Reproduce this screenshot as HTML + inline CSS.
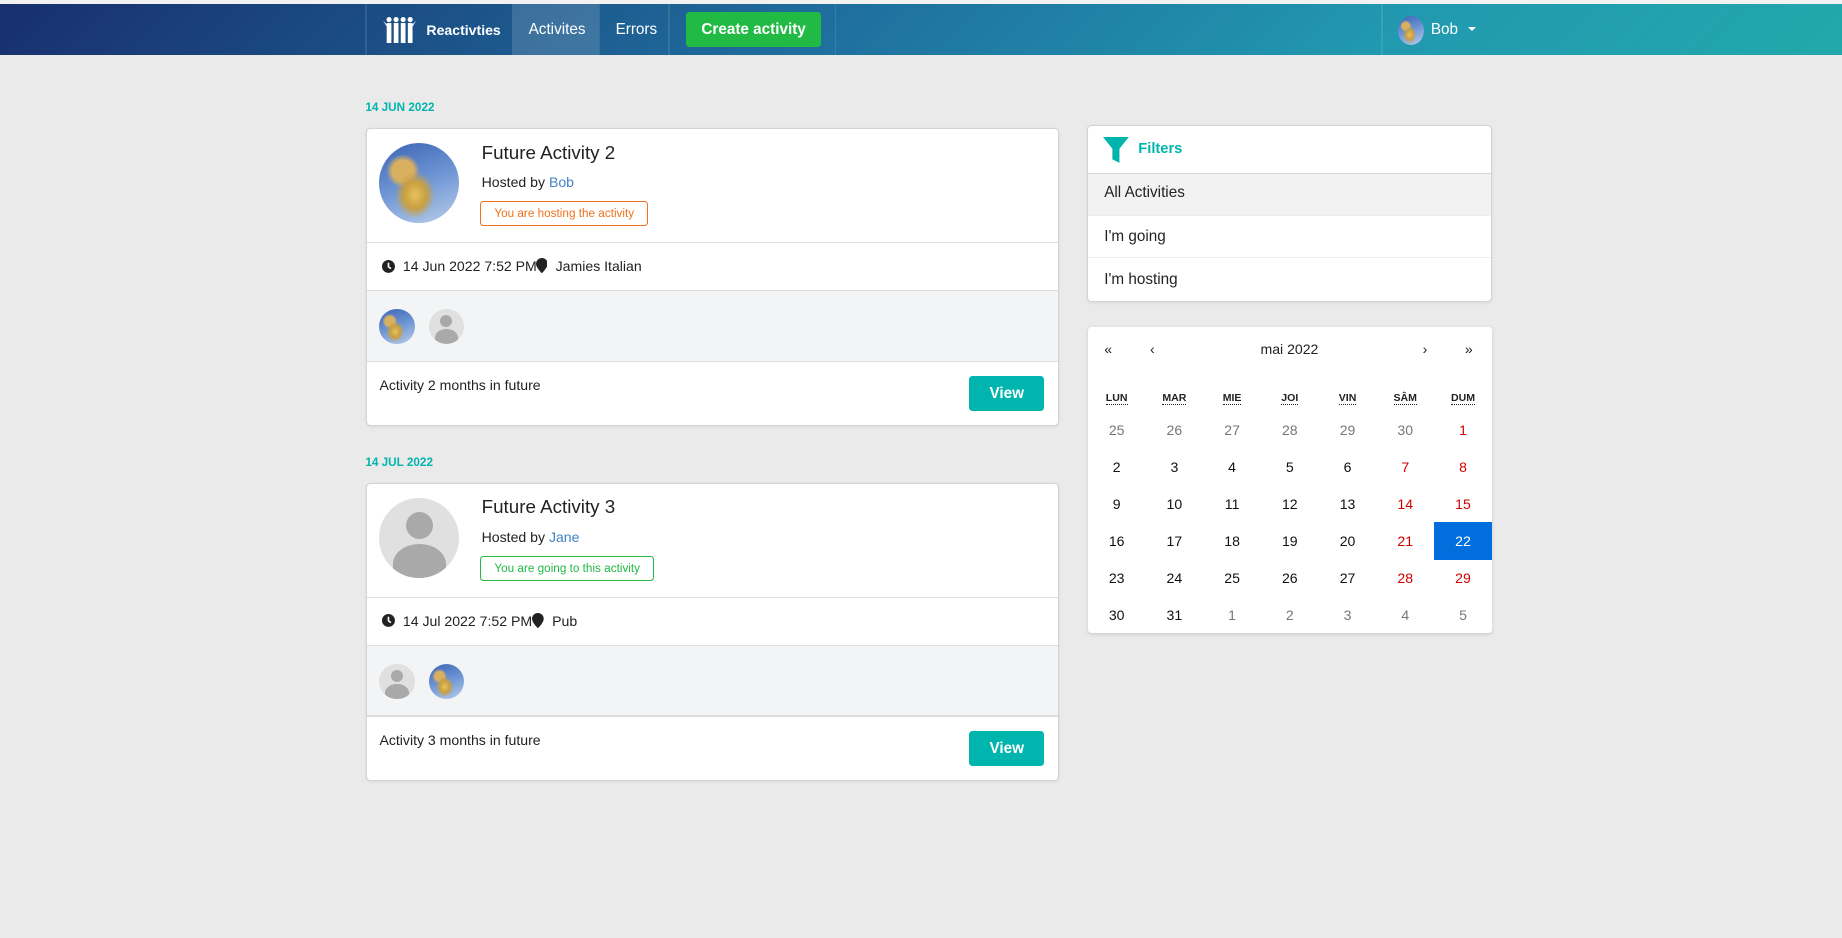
<!DOCTYPE html>
<html><head><meta charset="utf-8">
<style>
html,body{margin:0;padding:0;width:1842px;height:938px;overflow:hidden;background:#eaeaea;font-family:"Liberation Sans",sans-serif;}
#w{position:relative;width:1568px;height:798px;zoom:1.17474;background:#eaeaea;}
.a{position:absolute;}
.nav{left:0;top:3px;width:1568px;height:44px;background:linear-gradient(135deg,#182f6e 0%,#1f6f9e 45%,#2199b0 75%,#22a8ab 100%);}
.nt{color:#fff;font-size:13px;top:18px;}
.sep{top:3px;width:1px;height:44px;background:rgba(255,255,255,0.1);}
.card{background:#fff;border-radius:3px;box-shadow:0 1px 3px 0 #d4d4d5,0 0 0 1px #d4d4d5;}
.hr{height:1px;background:#dededf;left:0;width:100%;}
.date{color:#00b5ad;font-size:10px;font-weight:bold;}
.av{border-radius:50%;overflow:hidden;}
.photo{background:radial-gradient(ellipse at 45% 65%,#e8c060 0%,#c9a040 18%,transparent 32%),radial-gradient(circle at 30% 35%,#d8b060 0 14%,transparent 22%),linear-gradient(160deg,#3c64b4 0%,#6f96d4 50%,#b8cdea 100%);}
.ph{background:#e0e0e0;}
.ph::before{content:"";position:absolute;left:33%;top:17%;width:34%;height:34%;border-radius:50%;background:#a9a9a9;}
.ph::after{content:"";position:absolute;left:17%;top:57%;width:66%;height:50%;border-radius:50% 50% 0 0;background:#a9a9a9;}
.t{font-size:12px;color:#222;}
.btn{background:#00b5ad;color:#fff;font-weight:bold;font-size:13px;border-radius:3px;text-align:center;line-height:30px;}
.cal td{text-align:center;font-size:12px;height:31.6px;padding:0;color:#111;font-family:"Liberation Sans",Arial,sans-serif;}
.cal th{font-size:9px;font-weight:bold;height:20px;color:#222;}
.cal th span{border-bottom:1px dotted #222;}
.g{color:#777!important}.r{color:#d10000!important}
</style></head><body><div id="w">
<div class="a" style="left:0;top:0;width:1568px;height:3px;background:#f2f2f2"></div>
<div class="a nav"></div>
<div class="a sep" style="left:311px"></div>
<div class="a" style="left:436px;top:3px;width:74px;height:44px;background:rgba(255,255,255,0.15)"></div>
<div class="a sep" style="left:510px"></div>
<div class="a sep" style="left:569px"></div>
<div class="a sep" style="left:711px"></div>
<div class="a sep" style="left:1176px"></div>
<svg class="a" style="left:325px;top:14px" width="30" height="24" viewBox="0 0 30 24" fill="#fff">
<circle cx="6" cy="3" r="2.2"/><circle cx="12" cy="3" r="2.2"/><circle cx="18" cy="3" r="2.2"/><circle cx="24" cy="3" r="2.2"/>
<rect x="4" y="6" width="4" height="17"/><rect x="10" y="6" width="4" height="17"/><rect x="16" y="6" width="4" height="17"/><rect x="22" y="6" width="4" height="17"/>
<path d="M1 4 L4 9 L4 7Z M29 4 L26 9 L26 7Z"/></svg>
<div class="a nt" style="left:363px;font-weight:bold;font-size:12px;top:19px">Reactivties</div>
<div class="a nt" style="left:450px">Activites</div>
<div class="a nt" style="left:524px">Errors</div>
<div class="a" style="left:584px;top:10px;width:115px;height:30px;background:#21ba45;border-radius:3px;color:#fff;font-weight:bold;font-size:13px;text-align:center;line-height:30px">Create activity</div>
<div class="a av photo" style="left:1190px;top:14px;width:22px;height:24px"></div>
<div class="a nt" style="left:1218px">Bob</div>
<div class="a" style="left:1250px;top:23px;width:0;height:0;border-left:4px solid transparent;border-right:4px solid transparent;border-top:4px solid #fff"></div>

<!-- card 1 -->
<div class="a date" style="left:311px;top:86px">14 JUN 2022</div>
<div class="a card" style="left:312px;top:110px;width:589px;height:252px">
 <div class="a av photo" style="left:11px;top:12px;width:68px;height:68px"></div>
 <div class="a" style="left:98px;top:11px;font-size:16px;color:#222">Future Activity 2</div>
 <div class="a t" style="left:98px;top:38px">Hosted by <span style="color:#4183c4">Bob</span></div>
 <div class="a" style="left:97px;top:61px;width:141px;height:20px;border:1px solid #f2711c;border-radius:3px;color:#f2711c;font-size:10px;text-align:center;line-height:20px">You are hosting the activity</div>
 <div class="a hr" style="top:96px"></div>
 <svg class="a" style="left:13px;top:111px" width="11" height="11" viewBox="0 0 12 12"><circle cx="6" cy="6" r="6" fill="#222"/><path d="M6 2.5V6.3L8.3 8" stroke="#fff" stroke-width="1.5" fill="none"/></svg>
 <div class="a t" style="left:31px;top:110px">14 Jun 2022 7:52 PM</div>
 <svg class="a" style="left:144px;top:110px" width="10" height="13" viewBox="0 0 10 13"><path d="M5 0C2.2 0 0 2.2 0 5c0 3.2 5 8 5 8s5-4.8 5-8C10 2.2 7.8 0 5 0z" fill="#222"/></svg>
 <div class="a t" style="left:161px;top:110px">Jamies Italian</div>
 <div class="a hr" style="top:137px"></div>
 <div class="a" style="left:0;top:138px;width:100%;height:59px;background:#f3f4f5"></div>
 <div class="a av photo" style="left:11px;top:153px;width:30px;height:30px"></div>
 <div class="a av ph" style="left:53px;top:153px;width:30px;height:30px"></div>
 <div class="a hr" style="top:197px"></div>
 <div class="a t" style="left:11px;top:211px">Activity 2 months in future</div>
 <div class="a btn" style="left:513px;top:210px;width:64px;height:30px">View</div>
</div>

<!-- card 2 -->
<div class="a date" style="left:311px;top:388px">14 JUL 2022</div>
<div class="a card" style="left:312px;top:412px;width:589px;height:252px">
 <div class="a av ph" style="left:11px;top:12px;width:68px;height:68px"></div>
 <div class="a" style="left:98px;top:10px;font-size:16px;color:#222">Future Activity 3</div>
 <div class="a t" style="left:98px;top:38px">Hosted by <span style="color:#4183c4">Jane</span></div>
 <div class="a" style="left:97px;top:61px;width:146px;height:20px;border:1px solid #21ba45;border-radius:3px;color:#21ba45;font-size:10px;text-align:center;line-height:20px">You are going to this activity</div>
 <div class="a hr" style="top:96px"></div>
 <svg class="a" style="left:13px;top:111px" width="11" height="11" viewBox="0 0 12 12"><circle cx="6" cy="6" r="6" fill="#222"/><path d="M6 2.5V6.3L8.3 8" stroke="#fff" stroke-width="1.5" fill="none"/></svg>
 <div class="a t" style="left:31px;top:110px">14 Jul 2022 7:52 PM</div>
 <svg class="a" style="left:141px;top:110px" width="10" height="13" viewBox="0 0 10 13"><path d="M5 0C2.2 0 0 2.2 0 5c0 3.2 5 8 5 8s5-4.8 5-8C10 2.2 7.8 0 5 0z" fill="#222"/></svg>
 <div class="a t" style="left:158px;top:110px">Pub</div>
 <div class="a hr" style="top:137px"></div>
 <div class="a" style="left:0;top:138px;width:100%;height:59px;background:#f3f4f5"></div>
 <div class="a av ph" style="left:11px;top:153px;width:30px;height:30px"></div>
 <div class="a av photo" style="left:53px;top:153px;width:30px;height:30px"></div>
 <div class="a hr" style="top:197px"></div>
 <div class="a t" style="left:11px;top:211px">Activity 3 months in future</div>
 <div class="a btn" style="left:513px;top:210px;width:64px;height:30px">View</div>
</div>

<!-- filters -->
<div class="a card" style="left:926px;top:107px;width:343px;height:149px;overflow:hidden">
 <svg class="a" style="left:13px;top:10px" width="22" height="22" viewBox="0 0 22 22"><path d="M0 0H22L14 10V22L8 19V10Z" fill="#00b5ad"/></svg>
 <div class="a" style="left:43px;top:13px;color:#00b5ad;font-size:12.5px;font-weight:bold">Filters</div>
 <div class="a" style="left:0;top:40px;width:100%;height:2px;background:#d4d4d5"></div>
 <div class="a" style="left:0;top:41px;width:100%;height:35px;background:#f2f2f2"></div>
 <div class="a t" style="left:14px;top:50px;font-size:13px">All Activities</div>
 <div class="a hr" style="top:76px;background:#ececec"></div>
 <div class="a t" style="left:14px;top:87px;font-size:13px">I'm going</div>
 <div class="a hr" style="top:112px;background:#ececec"></div>
 <div class="a t" style="left:14px;top:124px;font-size:13px">I'm hosting</div>
</div>

<!-- calendar -->
<div class="a card" style="left:926px;top:278px;width:344px;height:261px;box-shadow:0 1px 3px #ccc">
 <div class="a t" style="left:14px;top:12px;font-size:12px">«</div>
 <div class="a t" style="left:53px;top:12px;font-size:12px">‹</div>
 <div class="a t" style="left:147px;top:12px;font-size:12px">mai 2022</div>
 <div class="a t" style="left:285px;top:12px;font-size:12px">›</div>
 <div class="a t" style="left:321px;top:12px;font-size:12px">»</div>
 <table class="a cal" style="left:0;top:50px;width:344px;border-collapse:collapse;table-layout:fixed">
 <tr><th><span>LUN</span></th><th><span>MAR</span></th><th><span>MIE</span></th><th><span>JOI</span></th><th><span>VIN</span></th><th><span>SÂM</span></th><th><span>DUM</span></th></tr>
 <tr><td class="g">25</td><td class="g">26</td><td class="g">27</td><td class="g">28</td><td class="g">29</td><td class="g">30</td><td class="r">1</td></tr>
 <tr><td>2</td><td>3</td><td>4</td><td>5</td><td>6</td><td class="r">7</td><td class="r">8</td></tr>
 <tr><td>9</td><td>10</td><td>11</td><td>12</td><td>13</td><td class="r">14</td><td class="r">15</td></tr>
 <tr><td>16</td><td>17</td><td>18</td><td>19</td><td>20</td><td class="r">21</td><td style="background:#006edc;color:#fff">22</td></tr>
 <tr><td>23</td><td>24</td><td>25</td><td>26</td><td>27</td><td class="r">28</td><td class="r">29</td></tr>
 <tr><td>30</td><td>31</td><td class="g">1</td><td class="g">2</td><td class="g">3</td><td class="g">4</td><td class="g">5</td></tr>
 </table>
</div>
</div></body></html>
